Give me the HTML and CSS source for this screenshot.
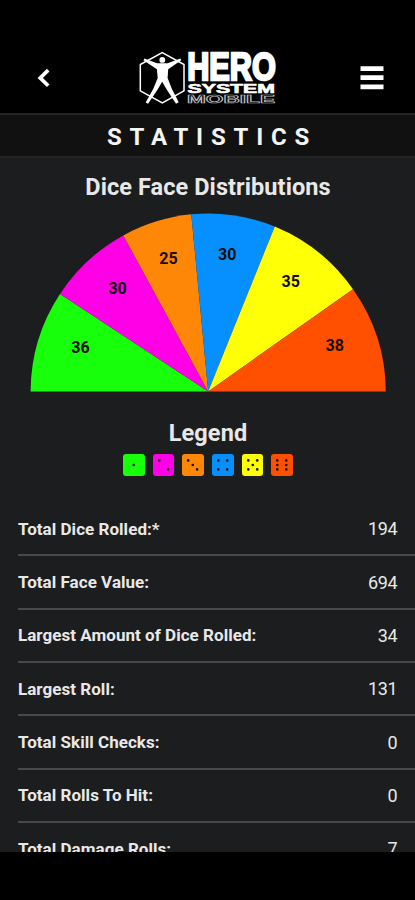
FILE: index.html
```html
<!DOCTYPE html>
<html lang="en">
<head>
<meta charset="utf-8">
<title>Hero System Mobile – Statistics</title>
<link rel="stylesheet" href="styles.css">
</head>
<body>
<div class="app">
  <header class="topbar">
    <button class="icon-button" aria-label="Back">
      <svg width="16" height="22" viewBox="0 0 16 22"><path d="m13.2 3.1-8 7.8 8 7.8" fill="none" stroke="#fff" stroke-width="3.7"/></svg>
    </button>
    <svg class="logo" width="140" height="56" viewBox="0 0 140 56" role="img" aria-label="Hero System Mobile">
      <path d="M24.3 2.6 46 14.5v26.3L24.3 53 2.3 40.8V14.5z" fill="none" stroke="#fff" stroke-width="1.5"/>
      <circle cx="24.3" cy="9.9" r="2.9" fill="#fff"/>
      <path d="M6.4 8.5 19 13.3h10.6L42.4 8.5l.8 1.7-13 9-.6 8.7 4.1 10.6 7 13.8-2.7 1.4-8.7-13.2-5.1-8.7-5.2 8.7-8.9 13.3-2.4-1.4 7.7-14 4.3-10.5-.8-8.7-13.4-9z" fill="#fff"/>
      <g class="logo-text">
        <text class="logo-hero" x="49.2" y="29.9" textLength="88.6" lengthAdjust="spacingAndGlyphs">HERO</text>
        <text class="logo-system" x="49.5" y="42.7" textLength="87.5" lengthAdjust="spacingAndGlyphs">SYSTEM</text>
        <text class="logo-mobile" x="49" y="53.4" textLength="88" lengthAdjust="spacingAndGlyphs">MOBILE</text>
      </g>
    </svg>
    <button class="icon-button" aria-label="Menu">
      <svg width="24" height="26" viewBox="0 0 24 26"><path d="M.5 3.6h23M.5 12.7h23M.5 21.8h23" stroke="#fff" stroke-width="4.8"/></svg>
    </button>
  </header>
  <h1 class="title">STATISTICS</h1>
  <main class="content">
    <h2 class="heading">Dice Face Distributions</h2>
    <svg class="chart" width="356" height="179" viewBox="30 213 356 179">
      <path fill="#17ff0b" d="M208.2 391.4H30.6A177.6 178 0 0 1 60 294z"/>
      <path fill="#ff00e6" d="M208.2 391.4 60 294A177.6 178 0 0 1 123.3 235.4z"/>
      <path fill="#ff8708" d="M208.2 391.4 123.3 235.4A177.6 178 0 0 1 191.3 214.3z"/>
      <path fill="#058fff" d="M208.2 391.4 191.3 214.3A177.6 178 0 0 1 274.8 226.5z"/>
      <path fill="#ffff05" d="M208.2 391.4 274.8 226.5A177.6 178 0 0 1 353 289.3z"/>
      <path fill="#ff4f00" d="M208.2 391.4 353 289.3A177.6 178 0 0 1 385.8 391.4z"/>
      <g class="chart-labels">
        <text x="80.4" y="353.1">36</text>
        <text x="117.6" y="293.6">30</text>
        <text x="168.4" y="264.1">25</text>
        <text x="227.2" y="259.6">30</text>
        <text x="290.8" y="287.1">35</text>
        <text x="334.7" y="351.1">38</text>
      </g>
    </svg>
    <h2 class="heading legend-heading">Legend</h2>
    <div class="legend">
      <svg class="die die-1" viewBox="0 0 22 22"><path d="M11 11h0"/></svg>
      <svg class="die die-2" viewBox="0 0 22 22"><path d="M6.3 6.4h0M15.4 15.5h0"/></svg>
      <svg class="die die-3" viewBox="0 0 22 22"><path d="M6.3 6.4h0M11 11h0M15.4 15.5h0"/></svg>
      <svg class="die die-4" viewBox="0 0 22 22"><path d="M6.4 6.4h0M15.5 6.4h0M6.4 15.5h0M15.5 15.5h0"/></svg>
      <svg class="die die-5" viewBox="0 0 22 22"><path d="M6.4 6.4h0M15.5 6.4h0M11 11h0M6.4 15.5h0M15.5 15.5h0"/></svg>
      <svg class="die die-6" viewBox="0 0 22 22"><path d="M6.4 6.4h0M15.5 6.4h0M6.4 11h0M15.5 11h0M6.4 15.5h0M15.5 15.5h0"/></svg>
    </div>
    <dl class="stats">
      <div class="row"><dt>Total Dice Rolled:*</dt><dd>194</dd></div>
      <div class="row"><dt>Total Face Value:</dt><dd>694</dd></div>
      <div class="row"><dt>Largest Amount of Dice Rolled:</dt><dd>34</dd></div>
      <div class="row"><dt>Largest Roll:</dt><dd>131</dd></div>
      <div class="row"><dt>Total Skill Checks:</dt><dd>0</dd></div>
      <div class="row"><dt>Total Rolls To Hit:</dt><dd>0</dd></div>
      <div class="row"><dt>Total Damage Rolls:</dt><dd>7</dd></div>
    </dl>
  </main>
</div>
</body>
</html>
```
FILE: styles.css
```css
* { box-sizing: border-box; margin: 0; padding: 0; }

body {
  background: #000;
  color: #e8e8e8;
  font-family: Roboto, "Liberation Sans", sans-serif;
}

.app {
  width: 415px;
  height: 900px;
  padding: 42px 0 48px;
  display: flex;
  flex-direction: column;
  overflow: hidden;
}

.topbar {
  flex: none;
  height: 71px;
  padding: 0 31px 0 35px;
  display: flex;
  align-items: center;
  justify-content: space-between;
}

.icon-button {
  display: flex;
  background: none;
  border: 0;
}

.logo {
  margin-left: 50px;
  margin-right: 46px;
  overflow: visible;
}

.logo-text {
  font-family: "Liberation Sans", sans-serif;
  font-weight: 700;
  fill: #fff;
}

.logo-hero { font-size: 38.5px; stroke: #fff; stroke-width: 2.5px; }
.logo-system { font-size: 12px; stroke: #fff; stroke-width: 0.6px; }
.logo-mobile { font-size: 10.4px; fill: #000; stroke: #bbb; stroke-width: 0.65px; }

.title {
  flex: none;
  height: 45px;
  padding-left: 9px;
  border-top: 2px solid #242424;
  border-bottom: 2px solid #242424;
  background: #111;
  color: #f4f4f2;
  font-size: 24px;
  font-weight: 700;
  line-height: 44px;
  letter-spacing: 7.8px;
  text-align: center;
}

.content {
  flex: 1;
  min-height: 0;
  padding-top: 1px;
  overflow: hidden;
  background: #1c1d1e;
}

.heading {
  height: 54px;
  padding-top: 14px;
  padding-left: 1px;
  font-size: 23.5px;
  font-weight: 700;
  line-height: 28px;
  letter-spacing: 0.08px;
  text-align: center;
}

.chart { display: block; margin-left: 30px; }

.chart-labels {
  fill: #140b08;
  font-size: 16px;
  font-weight: 700;
  text-anchor: middle;
}

.legend-heading { height: 62px; padding-top: 27px; }

.legend {
  padding-left: 1px;
  display: flex;
  justify-content: center;
  gap: 8px;
}

.die {
  width: 21.6px;
  height: 22px;
  border-radius: 3px;
  fill: none;
  stroke: #171717;
  stroke-width: 2.8px;
  stroke-linecap: round;
}

.die-1 { background: #17ff0b; }
.die-2 { background: #ff00e6; }
.die-3 { background: #ff8708; }
.die-4 { background: #058fff; }
.die-5 { background: #ffff05; }
.die-6 { background: #ff4f00; }

.stats { margin: 27px 0 0 18px; }

.row {
  height: 53.35px;
  padding-right: 17.8px;
  border-bottom: 2px solid #49494b;
  display: flex;
  align-items: center;
  justify-content: space-between;
}

.row dt { font-size: 17px; font-weight: 700; letter-spacing: 0.04px; }
.row dd { font-size: 18px; letter-spacing: -0.4px; }
```
